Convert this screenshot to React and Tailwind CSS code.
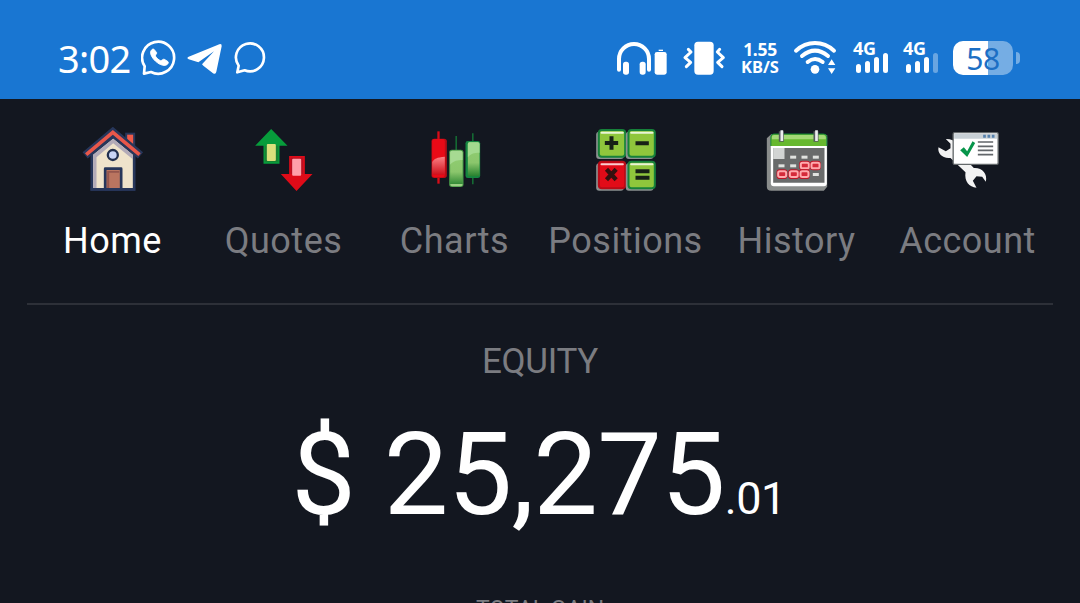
import React, { useState } from "react";

const HomeIcon = () => (
  <svg viewBox="28.5 21 198 198" className="size-[66px]">
    <path d="M164 38h30v60h-30z" fill="#27365a" />
    <path d="M170 44h18v50h-18z" fill="#f05a48" />
    <path d="M60 100 128 42l67 58v112H60z" fill="#27365a" />
    <path d="M68 104 128 56l59 48v100H68z" fill="#efe3cb" />
    <path d="M68 104 128 56l59 48v14L128 70 78 112v92H68z" fill="#b3abb8" />
    <path d="M44 106 127 36l83 70" fill="none" stroke="#27365a" strokeWidth="24" />
    <path d="M47 104 127 37l80 67" fill="none" stroke="#e8574a" strokeWidth="11" />
    <circle cx="127" cy="105" r="15" fill="#c9d5f5" stroke="#22304f" strokeWidth="7" />
    <path d="M104 146h48v62h-48z" fill="#ba7560" stroke="#27365a" strokeWidth="8" strokeLinejoin="round" />
    <path d="M110 204v-51h36v5h-30v46z" fill="#94564d" />
    <path d="M60 208h134" stroke="#27365a" strokeWidth="8" />
  </svg>
);

const QuotesIcon = () => (
  <svg viewBox="31.5 21 198 198" className="size-[66px]">
    <path d="M92 27 141 77h-24v54H69V77H44z" fill="#079c3b" />
    <path d="M73 77h40v49H73z" fill="#168233" />
    <rect x="79" y="72" width="27" height="51" rx="3" fill="#d9e07c" />
    <path d="M146 108h47v54h23l-48 51-47-51h25z" fill="#df0b18" />
    <path d="M150 113h38v49h-38z" fill="#ba1021" />
    <rect x="155" y="116" width="27" height="51" rx="3" fill="#ff9fa9" />
  </svg>
);

const ChartsIcon = () => (
  <svg viewBox="34.5 21 198 198" className="size-[66px]">
    <defs>
      <linearGradient id="red" x1="0" y1="0" x2="0" y2="1">
        <stop stopColor="#fb8085" />
        <stop offset="1" stopColor="#ce111c" />
      </linearGradient>
      <linearGradient id="green" x1="0" y1="0" x2="0" y2="1">
        <stop stopColor="#91cf72" />
        <stop offset=".6" stopColor="#8bc66c" />
        <stop offset="1" stopColor="#26812e" />
      </linearGradient>
    </defs>
    <path d="M84 34v157" stroke="#d70d18" strokeWidth="7" />
    <path d="M137 48v45M187 40v153" stroke="#157b37" strokeWidth="4" />
    <rect x="63" y="56" width="46" height="118" rx="8" fill="#b80d16" />
    <rect x="65" y="57" width="38" height="115" rx="7" fill="#e90a17" />
    <path d="M65 126c6-10 14-14 38-16v54H65z" fill="url(#red)" />
    <rect x="116" y="89" width="43" height="112" rx="8" fill="#479947" />
    <rect x="119" y="92" width="37" height="106" rx="6" fill="url(#green)" />
    <path d="M119 134c11-12 22-14 37-14V98c0-4-2-6-6-6h-25c-4 0-6 2-6 6z" fill="#a6da92" />
    <path d="M119 192h37v3q-2 4-6 4h-25q-6 0-6-7" fill="#9bcf83" />
    <rect x="165" y="63" width="44" height="111" rx="7" fill="#158540" />
    <rect x="172" y="67" width="35" height="102" rx="5" fill="url(#green)" />
    <path d="M172 112c7-10 18-14 35-14V72q0-5-5-5h-25q-5 0-5 5z" fill="#a3da8f" />
  </svg>
);

const keys = [
  { x: 54, y: 29, fill: "#8fc63c", border: "#16813a" },
  { x: 143, y: 29, fill: "#8fc63c", border: "#16813a" },
  { x: 54, y: 124, fill: "#e20b18", border: "#b80b17" },
  { x: 143, y: 124, fill: "#8fc63c", border: "#16813a" },
];

const PositionsIcon = () => (
  <svg viewBox="37.5 21 198 198" className="size-[66px]">
    {keys.map((key) => (
      <g key={`${key.x}-${key.y}`}>
        <rect x={key.x - 7} y={key.y + 6} width="83" height="82" rx="9" fill="#8b9190" />
        <rect x={key.x + 1} y={key.y + 1} width="79" height="80" rx="9" fill={key.fill} stroke={key.border} strokeWidth="6" />
        <path d={`M${key.x + 9} ${key.y + 9}h64`} stroke="#fff" strokeOpacity=".8" strokeWidth="6" strokeLinecap="round" />
      </g>
    ))}
    <g stroke="#172116" strokeWidth="12">
      <path d="M93 49v40M73 69h40M165 70h40M165 154h42M165 173h42" />
      <path d="m78 148 29 31M107 148l-29 31" stroke="#35100f" strokeWidth="13" />
    </g>
  </svg>
);

const emptyDays = [[119, 107], [153, 107], [187, 107], [84, 133], [119, 133], [187, 159]];
const markedDays = [[148, 127], [180, 127], [80, 153], [115, 153], [147, 153]];

const HistoryIcon = () => (
  <svg viewBox="40.5 21 198 198" className="size-[66px]">
    <path d="M62 43 49 55v145q0 12 13 12h158l10-12V45z" fill="#8a8d8c" />
    <rect x="61" y="43" width="168" height="156" rx="9" fill="#fff" />
    <path d="M61 78V51q0-9 9-9h149q10 0 10 9v27z" fill="#67b82f" />
    <path d="M64 58v-7q0-6 7-6h147q8 0 8 6v7z" fill="#a4d976" />
    <path d="M61 78V51q0-9 9-9h149q10 0 10 9v27" fill="none" stroke="#15833a" strokeWidth="3" />
    <path d="M68 84h154v104H68z" fill="#696b6b" />
    <path d="M68 84h34v33H68z" fill="#d2d4d3" />
    <path d="M85 34h15v31H85zM189 34h15v31h-15z" fill="#555b5c" />
    <path d="M90 31h8v32h-8zM194 31h8v32h-8z" fill="#eceeef" />
    {emptyDays.map(([x, y]) => (
      <rect key={`${x}-${y}`} x={x} y={y} width="18" height="9" fill="#e0e2df" />
    ))}
    {markedDays.map(([x, y]) => (
      <g key={`${x}-${y}`}>
        <rect x={x - 2} y={y - 5} width="33" height="29" rx="10" fill="#bd1527" />
        <rect x={x + 3} y={y + 1} width="24" height="17" rx="5" fill="#d52a3a" stroke="#ffa9ad" strokeWidth="6" />
      </g>
    ))}
  </svg>
);

const AccountIcon = () => (
  <svg viewBox="28.5 21 198 198" className="size-[66px]">
    <path
      d="M61 57 75 71v14l-14 9-22-12c-4 18 12 35 36 32l45 43c-4 27 11 45 33 46l-11-21 11-13 17 1 11 15c6-24-12-43-36-41L97 94c4-23-10-38-36-37z"
      fill="#f3f3f3"
    />
    <rect x="83" y="38" width="135" height="95" rx="4" fill="#fff" stroke="#64696b" strokeWidth="4" />
    <path d="M86 41h129v15H86z" fill="#c8d0d6" />
    <path d="M173 49h34" stroke="#5681ad" strokeWidth="9" strokeDasharray="8 5" />
    <path d="m104 91 11-9 10 12 16-30 8 5-24 42z" fill="#07954a" />
    <path d="M157 66h46M157 79h46M157 91h46M157 104h46" stroke="#62666a" strokeWidth="5" />
  </svg>
);

const tabs = [
  { name: "Home", icon: HomeIcon },
  { name: "Quotes", icon: QuotesIcon },
  { name: "Charts", icon: ChartsIcon },
  { name: "Positions", icon: PositionsIcon },
  { name: "History", icon: HistoryIcon },
  { name: "Account", icon: AccountIcon },
];

const Signal = ({ weak }) => (
  <div className="flex h-[34px] w-9 flex-col">
    <span className="font-['Noto_Sans'] text-[18px] leading-[14px] font-bold tracking-[-0.3px]">4G</span>
    <div className="-mt-[2px] ml-[3px] flex h-5 items-end gap-1">
      <i className="h-[9px] w-[5px] rounded-full bg-white" />
      <i className="h-3 w-[5px] rounded-full bg-white" />
      <i className="h-4 w-[5px] rounded-full bg-white" />
      <i className={`h-5 w-[5px] rounded-full bg-white ${weak ? "opacity-35" : ""}`} />
    </div>
  </div>
);

const StatusBar = () => (
  <header className="flex h-[99px] shrink-0 items-center justify-between bg-[#1976d2] pt-[17px] pr-[60px] pb-0 pl-[58px] text-white">
    <div className="flex items-center">
      <span className="w-[83px] font-['Noto_Sans'] text-[38px] leading-10 tracking-[-0.7px]">3:02</span>
      <svg viewBox="270 26 114 114" className="size-[38px]" fill="none">
        <path d="M281 108A48 48 0 1 1 300 125l-21 5z" stroke="#fff" strokeWidth="8" strokeLinejoin="round" />
        <path d="M309 57c-4-3-9 2-10 8-1 9 5 18 14 27 10 9 20 14 29 13 7-1 12-7 9-11l-11-7c-4-2-8 5-12 4-5-2-13-10-15-14-1-4 5-6 4-10z" fill="#fff" stroke="#fff" strokeWidth="3" />
      </svg>
      <svg viewBox="405 30 117 110" className="ml-[6px] h-[37px] w-[39px]">
        <path d="M416 80 508 42q8-2 7 6l-16 77q-2 9-10 4l-29-22-4-5 36-39-47 33-29-9q-8-3 0-7z" fill="#fff" />
      </svg>
      <svg viewBox="546 26 114 114" className="ml-[9px] size-[38px]" fill="none">
        <path d="M563 106A42 42 0 1 1 581 120l-22 6z" stroke="#fff" strokeWidth="8" strokeLinejoin="round" />
      </svg>
    </div>

    <div className="flex items-center">
      <svg viewBox="30 26 162 114" className="h-[38px] w-[54px]">
        <path d="M42 118V86a45 45 0 0 1 90 0v32" fill="none" stroke="#fff" strokeWidth="12" strokeLinecap="round" />
        <rect x="54" y="94" width="18" height="39" rx="8" fill="#fff" />
        <rect x="104" y="94" width="18" height="39" rx="8" fill="#fff" />
        <rect x="149" y="65" width="36" height="68" rx="7" fill="#fff" />
        <path d="M161 60h13" stroke="#fff" strokeWidth="4" />
      </svg>
      <svg viewBox="228 26 138 114" className="ml-3 h-[38px] w-[46px]" fill="none" stroke="#fff" strokeWidth="9" strokeLinecap="round" strokeLinejoin="round">
        <rect x="268" y="34" width="58" height="99" rx="11" fill="#fff" stroke="none" />
        <path d="m250 57 8 8-18 17 17 14-13 13M344 57l-7 8 18 17-17 14 13 13" />
      </svg>
      <div className="ml-[8px] flex w-[50px] flex-col pb-px text-center font-['Noto_Sans'] text-[17.5px] leading-[18px] font-bold tracking-[-0.3px]">
        <span>1.55</span>
        <span className="text-[16.5px] leading-[17px] tracking-normal">KB/S</span>
      </div>
      <svg viewBox="564 26 132 114" className="ml-[8px] h-[38px] w-[44px]" fill="none" stroke="#fff" strokeWidth="12" strokeLinecap="round">
        <path d="M573 61Q598 38 630 38t57 23M591 77q39-32 78 0M608 95q22-18 45 0" />
        <circle cx="630" cy="117" r="13" fill="#fff" stroke="none" />
        <path d="m680 87 11 17h-22zM680 131l-11-17h22z" fill="#fff" stroke="none" />
      </svg>
      <div className="ml-[16px] flex gap-[14px]">
        <Signal />
        <Signal weak />
      </div>
      <div className="ml-[14px] flex h-[34px] w-[60px] items-center justify-center rounded-[10px] bg-linear-to-r from-white from-58% to-[#75ade4] to-58% font-['Noto_Sans'] text-[30px] tracking-[-0.5px] text-[#1c6fc4]">
        58
      </div>
      <div className="ml-[3px] h-3 w-1 rounded-r-full bg-[#75ade4]" />
    </div>
  </header>
);

export default function App() {
  const [active, setActive] = useState("Home");

  return (
    <div className="flex h-[603px] w-full flex-col overflow-hidden bg-[#131720] font-['Roboto',sans-serif]">
      <StatusBar />

      <nav className="mx-[27px] grid h-[206px] shrink-0 grid-cols-6 border-b-2 border-[#2d3038] pt-7">
        {tabs.map(({ name, icon: Icon }) => (
          <button
            key={name}
            onClick={() => setActive(name)}
            className={`flex flex-col items-center text-[36px] leading-[42px] tracking-[0.5px] ${active === name ? "text-white" : "text-[#7b7c81]"}`}
          >
            <Icon />
            <span className="mt-[27px] whitespace-nowrap">{name}</span>
          </button>
        ))}
      </nav>

      {/* Account summary */}
      <main className="flex flex-col items-center">
        <h2 className="mt-[37px] text-[35px] leading-10 tracking-[-0.3px] text-[#7b7c81]">EQUITY</h2>
        <div className="mt-[25px] mr-[3px] flex h-[136px] items-baseline text-[115px] leading-[136px] tracking-[-0.8px] text-white">
          <span className="whitespace-nowrap [word-spacing:1px]">$ 25,275</span>
          <span className="text-[45px] tracking-[-0.5px]">.01</span>
        </div>
        <h3 className="mt-[51px] text-[23px] leading-8 whitespace-nowrap text-[#7b7c81]">TOTAL GAIN</h3>
      </main>
    </div>
  );
}
